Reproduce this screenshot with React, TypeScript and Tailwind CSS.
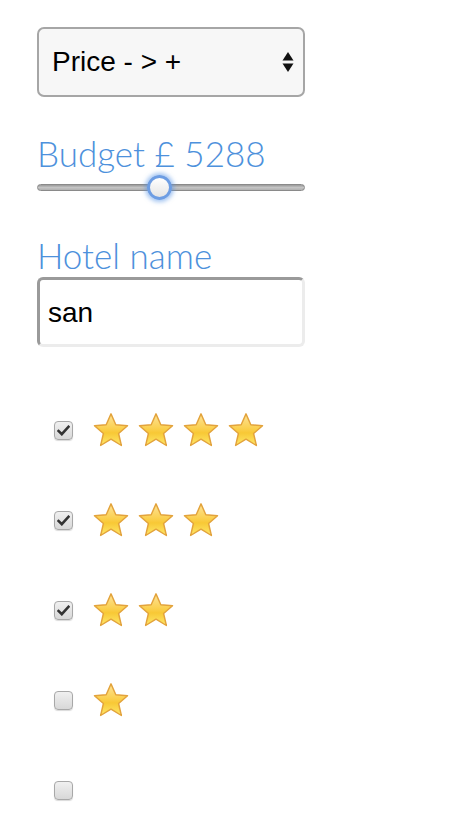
import React from "react";

function Star() {
  return (
    <svg width="38" height="37" viewBox="0 0 37 36" className="block">
      <defs>
        <linearGradient id="sg" x1="0" y1="0" x2="0" y2="1">
          <stop offset="0" stopColor="#fde49a" />
          <stop offset="0.45" stopColor="#fbd050" />
          <stop offset="0.6" stopColor="#f8c835" />
          <stop offset="1" stopColor="#fee86a" />
        </linearGradient>
      </defs>
      <path
        d="M18.5 1.8 L23.2 12.4 L34.6 13.3 L25.9 20.9 L28.6 32.6 L18.5 26.4 L8.4 32.6 L11.1 20.9 L2.4 13.3 L13.8 12.4 Z"
        fill="url(#sg)"
        stroke="#e3a33c"
        strokeWidth="1.4"
        strokeLinejoin="round"
      />
    </svg>
  );
}

function Checkbox({ checked }: { checked: boolean }) {
  return (
    <div className="w-[19px] h-[19px] rounded-[4px] border border-[#a8a8a8] bg-gradient-to-b from-[#f0f0f0] to-[#d8d8d8] flex items-center justify-center shadow-[0_1px_1px_rgba(0,0,0,0.15)]">
      {checked && (
        <svg width="13" height="11" viewBox="0 0 13 11">
          <path d="M1.5 6 L4.8 9.2 L11.5 1.8" fill="none" stroke="#333" strokeWidth="2.6" strokeLinecap="square" />
        </svg>
      )}
    </div>
  );
}

function Row({ checked, stars }: { checked: boolean; stars: number }) {
  return (
    <div className="flex items-center h-[36px]">
      <div className="w-[55px] pl-[17px]">
        <Checkbox checked={checked} />
      </div>
      <div className="flex gap-[7px]">
        {Array.from({ length: stars }).map((_, i) => (
          <Star key={i} />
        ))}
      </div>
    </div>
  );
}

export default function App() {
  const label = "text-[#4d91dc] text-[35px] leading-[38px] font-light";
  const arial = { fontFamily: "'Liberation Sans', Arial, sans-serif" };
  return (
    <div className="bg-white w-[466px] h-[834px] pl-[37px] pt-[27px]" style={{ fontFamily: "Lato, 'Liberation Sans', sans-serif" }}>
      <div className="w-[268px]">
        <div className="h-[70px] rounded-[7px] border-2 border-[#a6a6a6] bg-[#f7f7f7] flex items-center justify-between pl-[13px] pr-[9px]">
          <span className="text-[28px] text-black" style={arial}>Price - &gt; +</span>
          <svg width="12" height="22" viewBox="0 0 12 22">
            <path d="M6 1 L11.5 9.5 L0.5 9.5 Z" fill="#111" />
            <path d="M6 21 L11.5 12.5 L0.5 12.5 Z" fill="#111" />
          </svg>
        </div>

        <div className={`${label} mt-[37px]`}>Budget £ 5288</div>
        <div className="relative mt-[12px] h-[8px]">
          <div className="h-[7px] rounded-full border border-[#8a8a8a] bg-gradient-to-b from-[#9a9a9a] via-[#c4c4c4] to-[#b0b0b0]" />
          <div className="absolute left-[110px] top-[-9px] w-[25px] h-[25px] rounded-full border-[3px] border-[#6d9de3] bg-gradient-to-b from-[#ffffff] to-[#e4e4e4] shadow-[0_0_4px_2px_rgba(90,150,230,0.55)]" />
        </div>

        <div className={`${label} mt-[44px]`}>Hotel name</div>
        <div className="mt-[3px] h-[70px] rounded-[6px] border-[3px] border-t-[#9a9a9a] border-l-[#9a9a9a] border-r-[#ececec] border-b-[#ececec] bg-white flex items-center pl-[8px] pt-[1px]">
          <span className="text-[28px] text-black" style={arial}>san</span>
        </div>
      </div>

      <div className="mt-[65px] flex flex-col gap-[54px]">
        <Row checked={true} stars={4} />
        <Row checked={true} stars={3} />
        <Row checked={true} stars={2} />
        <Row checked={false} stars={1} />
        <Row checked={false} stars={0} />
      </div>
    </div>
  );
}
